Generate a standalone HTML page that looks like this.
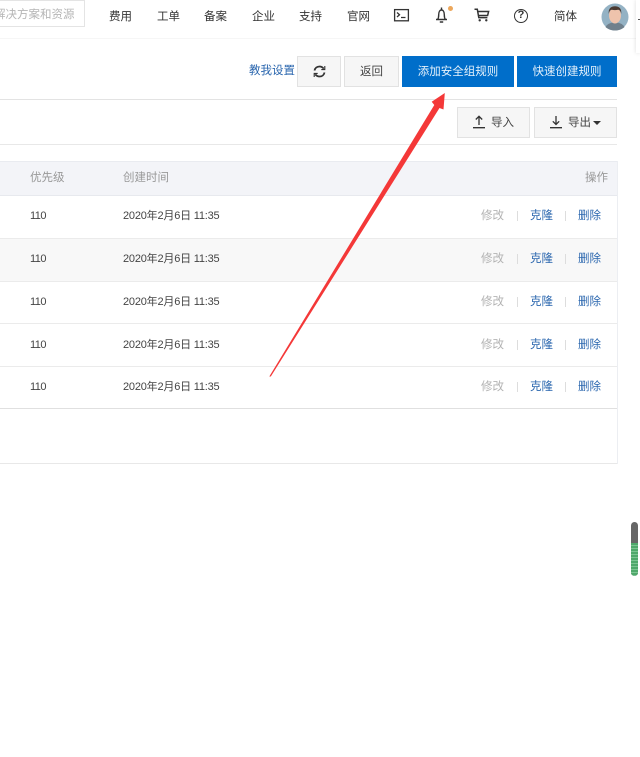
<!DOCTYPE html>
<html lang="zh-CN">
<head>
<meta charset="utf-8">
<title>安全组规则</title>
<style>
html,body{margin:0;padding:0;background:#fff;}
body{width:640px;height:757px;position:relative;overflow:hidden;font-family:"Liberation Sans","Noto Sans CJK SC",sans-serif;font-size:11.5px;color:#333;}
#w{position:absolute;left:0;top:0;width:640px;height:757px;overflow:hidden;filter:blur(.35px);}
.a{position:absolute;white-space:nowrap;line-height:19px;}
.l{position:absolute;}
.nav{top:8px;color:#333;}
.btn{position:absolute;box-sizing:border-box;background:#f6f6f6;border:1px solid #e2e2e2;text-align:center;color:#444;}
.pri{position:absolute;box-sizing:border-box;background:#006eca;color:#e4f1fb;text-align:center;line-height:33px;height:31px;top:56px;overflow:hidden;}
.g{color:#b3b3b3;}
.b{color:#2a66ae;}
.h{color:#999;}
.t{color:#444;}
.n{font-size:11px;letter-spacing:-.5px;}
.d{font-size:11px;letter-spacing:-.2px;}
svg{position:absolute;overflow:visible;}
</style>
</head>
<body>
<div id="w">

<!-- top nav -->
<div class="l" style="left:0;top:0;width:85px;height:27px;box-sizing:border-box;border:1px solid #e4e4e4;border-left:0;"></div>
<div class="a" style="left:-6px;top:6px;color:#b5b5b5;">解决方案和资源</div>
<div class="l" style="left:0;top:38px;width:636px;height:1px;background:#f6f6f6;"></div>
<div class="a nav" style="left:109px;">费用</div>
<div class="a nav" style="left:157px;">工单</div>
<div class="a nav" style="left:204px;">备案</div>
<div class="a nav" style="left:252px;">企业</div>
<div class="a nav" style="left:299px;">支持</div>
<div class="a nav" style="left:347px;">官网</div>
<div class="a nav" style="left:554px;">简体</div>

<!-- terminal -->
<svg style="left:394px;top:9px" width="15" height="13" viewBox="0 0 15 13" fill="none" stroke="#333" stroke-width="1.300"><rect x=".6" y=".6" width="13.8" height="11.2"/><path d="M3 3.500l2.500 2.300L3 8M7 8.500h4.500"/></svg>
<!-- bell -->
<svg style="left:435px;top:6px" width="13" height="17" viewBox="0 0 13 17" fill="none" stroke="#333" stroke-width="1.400"><path d="M1 13.500h11M2.700 13.500c.8-1.300 1-2.600 1-4.700 0-2.800 1.100-4.800 2.800-4.800s2.800 2 2.800 4.800c0 2.100.2 3.400 1 4.700M6.500 1.500V4M4.800 16h3.400"/></svg>
<div class="l" style="left:448px;top:6px;width:5px;height:5px;border-radius:50%;background:#eca75c;"></div>
<!-- cart -->
<svg style="left:474px;top:8px" width="16" height="14" viewBox="0 0 16 14" fill="none" stroke="#333" stroke-width="1.500"><path d="M.5 1.300h2.800l1.500 8.300h8.600M3.600 3.500h11l-1 4H4.300"/><circle cx="5.700" cy="12.300" r="1.200" fill="#333" stroke="none"/><circle cx="12.300" cy="12.300" r="1.200" fill="#333" stroke="none"/></svg>
<!-- help -->
<div class="l" style="left:514px;top:9px;width:14px;height:14px;box-sizing:border-box;border:1.500px solid #333;border-radius:50%;text-align:center;font-size:11px;line-height:11px;font-weight:bold;color:#333;">?</div>
<!-- avatar -->
<svg style="left:601px;top:3px" width="28" height="28" viewBox="0 0 28 28">
<circle cx="14" cy="14" r="13.500" fill="#94b2c4"/>
<path d="M4.500 24c2-3.500 5.500-4.500 9.500-4.500s7.500 1 9.500 4.500c-2.500 2.400-5.800 3.500-9.500 3.500S7 26.400 4.500 24z" fill="#70808c"/>
<ellipse cx="14" cy="12.500" rx="6" ry="8" fill="#eec3ac"/>
<path d="M7.800 11C7 5 10.500 3.200 14 3.200S21 5 20.200 11c-.6-3-1.500-4-3-4.200-2.200.5-4.400.5-6.400 0-1.500.2-2.400 1.200-3 4.200z" fill="#4a3a32"/>
</svg>
<!-- right panel -->
<div class="l" style="left:636px;top:0;width:4px;height:53px;background:#fff;box-shadow:0 0 4px rgba(0,0,0,.14);"></div>
<div class="l" style="left:638px;top:19px;width:2px;height:1px;background:#555;"></div>

<!-- toolbar -->
<div class="a b" style="left:249px;top:62px;">教我设置</div>
<div class="btn" style="left:297px;top:56px;width:44px;height:31px;"></div>
<svg style="left:313px;top:65px" width="13" height="13" viewBox="0 0 13 13" fill="none" stroke="#333" stroke-width="1.800"><path d="M1.500 5.500C2 3 4 1.500 6.500 1.500c1.800 0 3.200.8 4.200 2.200M11.500 7.500C11 10 9 11.500 6.500 11.500c-1.800 0-3.200-.8-4.200-2.200"/><path d="M11.800 1v3.600H8.300M1.200 12V8.400h3.500" stroke-width="1.100"/></svg>
<div class="btn" style="left:344px;top:56px;width:55px;height:31px;line-height:30px;">返回</div>
<div class="pri" style="left:402px;width:112px;">添加安全组规则</div>
<div class="pri" style="left:517px;width:100px;">快速创建规则</div>

<div class="l" style="left:0;top:99px;width:617px;height:1px;background:#e3e3e3;"></div>
<div class="l" style="left:0;top:144px;width:617px;height:1px;background:#e8e8e8;"></div>

<div class="btn" style="left:457px;top:107px;width:73px;height:31px;"></div>
<svg style="left:472px;top:115px" width="14" height="14" viewBox="0 0 14 14" fill="none" stroke="#333" stroke-width="1.300"><path d="M7 10V1.500M3.800 4.500L7 1.300l3.200 3.200M1 12.700h12"/></svg>
<div class="a t" style="left:491px;top:114px;">导入</div>
<div class="btn" style="left:534px;top:107px;width:83px;height:31px;"></div>
<svg style="left:549px;top:115px" width="14" height="14" viewBox="0 0 14 14" fill="none" stroke="#333" stroke-width="1.300"><path d="M7 1v8.500M3.800 6.300L7 9.500l3.200-3.200M1 12.700h12"/></svg>
<div class="a t" style="left:568px;top:114px;">导出</div>
<div class="l" style="left:593px;top:121px;width:0;height:0;border:4px solid transparent;border-top:4px solid #333;border-bottom:0;"></div>

<!-- table -->
<div class="l" style="left:0;top:161px;width:617px;height:35px;background:#f3f4f8;border-top:1px solid #e9ebf0;border-bottom:1px solid #e7e9ee;box-sizing:border-box;"></div>
<div class="l" style="left:0;top:239px;width:617px;height:42px;background:#f8f8f8;"></div>
<div class="l" style="left:0;top:238px;width:617px;height:1px;background:#ebebeb;"></div>
<div class="l" style="left:0;top:281px;width:617px;height:1px;background:#ebebeb;"></div>
<div class="l" style="left:0;top:323px;width:617px;height:1px;background:#ebebeb;"></div>
<div class="l" style="left:0;top:366px;width:617px;height:1px;background:#ebebeb;"></div>
<div class="l" style="left:0;top:408px;width:617px;height:1px;background:#e0e0e0;"></div>
<div class="l" style="left:0;top:463px;width:617px;height:1px;background:#e8e8e8;"></div>
<div class="l" style="left:617px;top:161px;width:1px;height:303px;background:#eceef2;"></div>

<div class="a h" style="left:30px;top:169px;">优先级</div>
<div class="a h" style="left:123px;top:169px;">创建时间</div>
<div class="a h" style="left:585px;top:169px;">操作</div>

<div class="a t n" style="left:30px;top:207px;">110</div>
<div class="a t d" style="left:123px;top:207px;">2020年2月6日 11:35</div>
<div class="a g" style="left:481px;top:207px;">修改</div>
<div class="l" style="left:517px;top:211px;width:1px;height:10px;background:#ddd;"></div>
<div class="a b" style="left:530px;top:207px;">克隆</div>
<div class="l" style="left:565px;top:211px;width:1px;height:10px;background:#ddd;"></div>
<div class="a b" style="left:578px;top:207px;">删除</div>

<div class="a t n" style="left:30px;top:250px;">110</div>
<div class="a t d" style="left:123px;top:250px;">2020年2月6日 11:35</div>
<div class="a g" style="left:481px;top:250px;">修改</div>
<div class="l" style="left:517px;top:254px;width:1px;height:10px;background:#ddd;"></div>
<div class="a b" style="left:530px;top:250px;">克隆</div>
<div class="l" style="left:565px;top:254px;width:1px;height:10px;background:#ddd;"></div>
<div class="a b" style="left:578px;top:250px;">删除</div>

<div class="a t n" style="left:30px;top:293px;">110</div>
<div class="a t d" style="left:123px;top:293px;">2020年2月6日 11:35</div>
<div class="a g" style="left:481px;top:293px;">修改</div>
<div class="l" style="left:517px;top:297px;width:1px;height:10px;background:#ddd;"></div>
<div class="a b" style="left:530px;top:293px;">克隆</div>
<div class="l" style="left:565px;top:297px;width:1px;height:10px;background:#ddd;"></div>
<div class="a b" style="left:578px;top:293px;">删除</div>

<div class="a t n" style="left:30px;top:336px;">110</div>
<div class="a t d" style="left:123px;top:336px;">2020年2月6日 11:35</div>
<div class="a g" style="left:481px;top:336px;">修改</div>
<div class="l" style="left:517px;top:340px;width:1px;height:10px;background:#ddd;"></div>
<div class="a b" style="left:530px;top:336px;">克隆</div>
<div class="l" style="left:565px;top:340px;width:1px;height:10px;background:#ddd;"></div>
<div class="a b" style="left:578px;top:336px;">删除</div>

<div class="a t n" style="left:30px;top:378px;">110</div>
<div class="a t d" style="left:123px;top:378px;">2020年2月6日 11:35</div>
<div class="a g" style="left:481px;top:378px;">修改</div>
<div class="l" style="left:517px;top:382px;width:1px;height:10px;background:#ddd;"></div>
<div class="a b" style="left:530px;top:378px;">克隆</div>
<div class="l" style="left:565px;top:382px;width:1px;height:10px;background:#ddd;"></div>
<div class="a b" style="left:578px;top:378px;">删除</div>

<!-- red arrow -->
<svg style="left:0;top:0" width="640" height="757" viewBox="0 0 640 757"><path d="M269.300 376.500L434.300 105L431.700 101.700L444.800 93L443.500 109.500L439.500 108L270.800 376.500Z" fill="#f43838"/></svg>

<!-- scroll widget -->
<div class="l" style="left:631px;top:522px;width:7px;height:54px;border-radius:3.500px;background:#666;overflow:hidden;">
<div style="position:absolute;left:0;top:21px;width:7px;height:33px;background:repeating-linear-gradient(#4fa86b 0 2px,#7cc592 2px 3px);"></div>
</div>
</div>
</body>
</html>
